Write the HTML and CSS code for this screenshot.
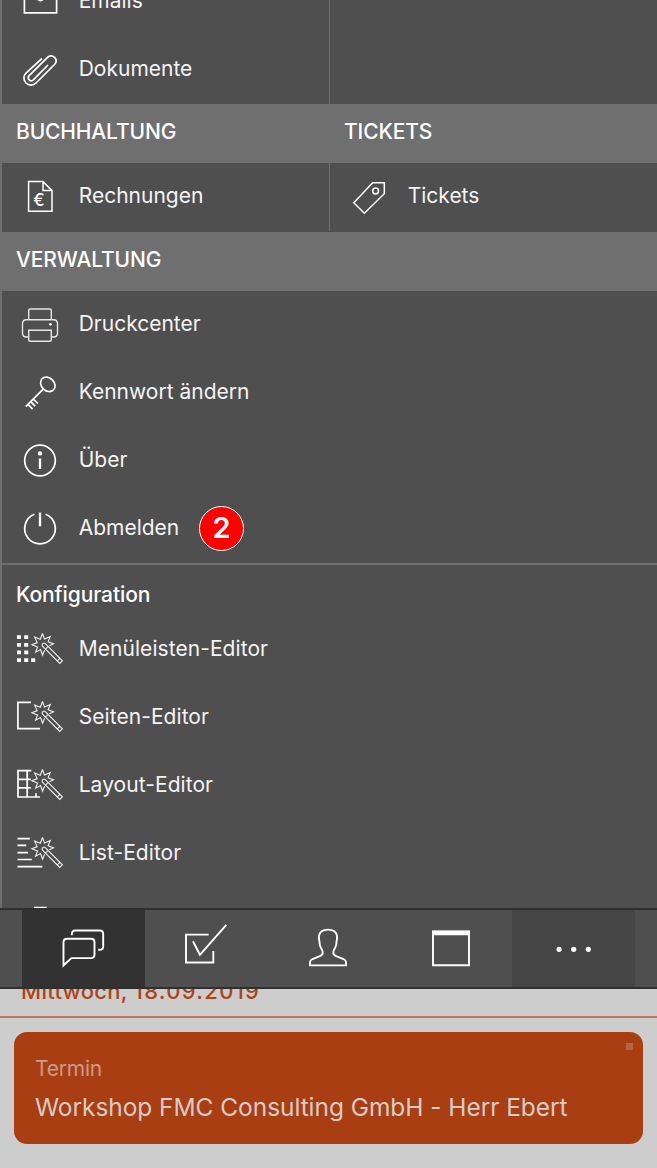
FILE: index.html
```html
<!DOCTYPE html>
<html lang="de">
<head>
<meta charset="utf-8">
<title>Menü</title>
<link rel="stylesheet" href="styles.css">
</head>
<body>
<svg class="defs" aria-hidden="true">
  <symbol id="wand" viewBox="0 0 48 48">
    <path d="M26.5 8.5l2 5.6 5.8-2.6-2.2 5.3 5.4 2.1-4.1 1.9M28.6 25.2l-2.1 5-1.9-5.6-5 2.6 1.9-5.2-5.6-2.2 5.3-2.2-2.6-5.6 5.7 2.3 2.2-5.8"/>
    <path d="M29.3 18.7L46.4 35.8l-2.6 2.6L26.7 21.3a1.8 1.8 0 0 1 2.6-2.6zM32.1 21.5l-2.6 2.6M43.8 33.4l-2.5 2.5"/>
  </symbol>
</svg>
<div class="screen">
  <nav class="menu">
    <div class="cols first">
      <div class="col">
        <a class="row"><svg class="icon" viewBox="0 0 48 48"><path d="M8.4 8H40.6V35.8H8.4zM8.4 10L21.5 22Q24.5 25.2 27.5 22L40.6 10"/></svg><span>Emails</span></a>
        <a class="row"><svg class="icon" viewBox="0 0 48 48"><path d="M26 13.5L10 28A7 7 0 0 0 20 38L39 19A5 5 0 0 0 32 12L12.9 30.9A3 3 0 0 0 17.1 35.1L32 20"/></svg><span>Dokumente</span></a>
      </div>
      <div class="col"></div>
    </div>
    <div class="heads"><h2>BUCHHALTUNG</h2><h2>TICKETS</h2></div>
    <div class="cols">
      <div class="col">
        <a class="row"><svg class="icon" viewBox="0 0 48 48"><path class="mid" d="M12.6 8.6H27L36 17.6V38.2H12.6zM27 8.6V17.6H36"/><text x="17.3" y="33.2" class="euro">€</text></svg><span>Rechnungen</span></a>
      </div>
      <div class="col">
        <a class="row"><svg class="icon" viewBox="0 0 48 48"><path class="mid" d="M27.7 9.7H39.3V20.7L19.3 40.2L8.8 29.7z"/><circle class="mid" cx="30.6" cy="18" r="2.9"/></svg><span>Tickets</span></a>
      </div>
    </div>
    <div class="heads admin"><h2>VERWALTUNG</h2></div>
    <div class="list">
      <a class="row"><svg class="icon" viewBox="0 0 48 48"><g class="fine"><path d="M12.7 18.7V9.5q0-1.5 1.5-1.5H33.8q1.5 0 1.5 1.5V18.7M12.7 36H10.5q-4 0-4-4V22.7q0-4 4-4H37.5q4 0 4 4V32q0 4-4 4H35.3"/><path d="M12.7 29.2H35.3V38.8q0 1.5-1.5 1.5H14.2q-1.5 0-1.5-1.5z"/></g><circle class="solid" cx="34.4" cy="23.3" r="1.4"/></svg><span>Druckcenter</span></a>
      <a class="row"><svg class="icon" viewBox="0 0 48 48"><ellipse cx="31.8" cy="15.3" rx="8" ry="6.4" transform="rotate(45 31.8 15.3)"/><path d="M27.2 20.2L9.7 37.7M12 35.4l4.6 4.8M14.7 32.7l4.4 4.4M17.3 30.1l4.6 4.4"/></svg><span>Kennwort ändern</span></a>
      <a class="row"><svg class="icon" viewBox="0 0 48 48"><circle cx="24" cy="23.5" r="15.3"/><circle class="solid" cx="24" cy="16.4" r="2.2"/><path class="stem" d="M24 21.5V32"/></svg><span>Über</span></a>
      <a class="row"><svg class="icon" viewBox="0 0 48 48"><path d="M18.4 9.3A15.3 15.3 0 1 0 29.6 9.3"/><path class="stem" d="M24 7.6V21.3"/></svg><span>Abmelden</span><b class="badge">2</b></a>
    </div>
    <div class="config">
      <h3>Konfiguration</h3>
      <a class="row"><svg class="icon" viewBox="0 0 48 48"><path class="solid" d="M1 10.3h4v3.8h-4zM8.2 10.3h4v3.8h-4zM1 17.9h4v3.8h-4zM8.2 17.9h4v3.8h-4zM1 25.5h4v3.8h-4zM8.2 25.5h4v3.8h-4zM1 33.3h4v3.8h-4zM8.2 33.3h4v3.8h-4zM15.2 33.3h4v3.8h-4z"/><use href="#wand" class="wand"/></svg><span>Menüleisten-Editor</span></a>
      <a class="row"><svg class="icon" viewBox="0 0 48 48"><path d="M15 9.3H1.9V35.7H24"/><use href="#wand" class="wand"/></svg><span>Seiten-Editor</span></a>
      <a class="row"><svg class="icon" viewBox="0 0 48 48"><path d="M15.3 9.6H2V36H24M11.2 9.6V36M2 18.3H14.8M2 26.8H14.8M20 32.3V36"/><use href="#wand" class="wand"/></svg><span>Layout-Editor</span></a>
      <a class="row"><svg class="icon" viewBox="0 0 48 48"><path d="M1.5 9.7h12.3M1.5 16.4h8.7M1.5 23.6h10.5M1.5 30.5h14.3M1.5 37.6h24.8"/><use href="#wand" class="wand"/></svg><span>List-Editor</span></a>
      <a class="row"><svg class="icon" viewBox="0 0 48 48"><path d="M18.8 10.6h11v8h-11z"/></svg></a>
    </div>
  </nav>
  <div class="tabs">
    <a class="tab active"><svg viewBox="0 0 56 56"><path d="M16.8 14.2V13q0-3.5 3.5-3.5H44.7q3.5 0 3.5 3.5V25.2q0 3.6-3.5 3.6H43.2"/><path d="M12 17.8H36q3.5 0 3.5 3.5V33.6q0 3.5-3.5 3.5H16.4L8.5 44.5V21.3q0-3.5 3.5-3.5z"/></svg></a>
    <a class="tab"><svg viewBox="0 0 56 56"><path d="M30.6 13.6H8V41.5H35.3V30M15 20.2L21.9 33.8L48.3 3.9"/></svg></a>
    <a class="tab"><svg viewBox="0 0 56 56"><path d="M10 44.4V41.2Q10 39.2 12.5 38L20.4 34.8Q23 33.6 22.7 31.2Q22.5 29.5 21 27Q19.3 24 19.5 20.8Q18.8 18 18.9 15.5Q19.5 8.6 28 8.6T37.1 15.5Q37.2 18 36.5 20.8Q36.7 24 35 27Q33.5 29.5 33.3 31.2Q33 33.6 35.6 34.8L43.5 38Q46 39.2 46 41.2V44.4z"/></svg></a>
    <a class="tab"><svg viewBox="0 0 56 56"><path d="M10 10.5H46V44.2H10z"/><path class="solid" d="M9.2 9.8H46.8V14.2H9.2z"/></svg></a>
    <a class="tab more"><svg viewBox="0 0 56 56"><g class="solid"><circle cx="13.1" cy="28.3" r="2.6"/><circle cx="27.7" cy="28.3" r="2.6"/><circle cx="42.3" cy="28.3" r="2.6"/></g></svg></a>
  </div>
  <main class="agenda">
    <div class="date"><div>Mittwoch, <span class="day">18.09.2019</span></div></div>
    <div class="card">
      <i class="mark"></i>
      <div class="kind">Termin</div>
      <div class="title">Workshop FMC Consulting GmbH - Herr Ebert</div>
    </div>
  </main>
</div>
</body>
</html>
```
FILE: styles.css
```css
* { box-sizing: border-box; }
body { margin: 0; background: #cdcdcd; font-family: Inter, "Liberation Sans", sans-serif; }
.defs { position: absolute; width: 0; height: 0; }
.screen { width: 657px; height: 1168px; overflow: hidden; display: flex; flex-direction: column; }

.menu { height: 908px; flex: none; overflow: hidden; background: #4f4f4f; color: #fff; border-left: 2px solid #6f6f6f; }
.cols { display: flex; height: 69px; }
.cols.first { height: 104px; align-items: flex-end; overflow: hidden; }
.cols.first .col { height: 137px; }
.col { width: 327px; height: 68px; }
.col + .col { width: 328px; border-left: 1px solid #6f6f6f; }
.row { display: flex; align-items: center; height: 68px; padding-left: 14px; gap: 14.7px; font-size: 21px; font-weight: 400; line-height: 26px; color: #f4f4f4; }
.row span { padding-bottom: 2px; }
.cols.first .row span, .config .row span { padding-bottom: 0; }
.config .row span { letter-spacing: 0.06px; }
.col + .col .row { padding-left: 15px; }
.heads { display: flex; height: 59px; margin-left: -2px; padding-left: 2px; background: #6f6f6f; }
.heads h2 { margin: 0; width: 329px; padding: 14px 0 0 14px; font-size: 21px; font-weight: 500; line-height: 27px; letter-spacing: -0.13px; }
.heads h2 + h2 { padding-left: 14.5px; }
.config { border-top: 2px solid #6f6f6f; }
.config h3 { margin: 0; height: 50px; padding: 16px 0 0 14px; font-size: 21px; font-weight: 500; line-height: 27px; letter-spacing: -0.1px; }

.icon { flex: none; width: 48px; height: 48px; }
.icon, .tab svg { fill: none; stroke: #fff; stroke-width: 1.7; overflow: visible; }
.icon .mid { stroke-width: 1.5; }
.icon .fine { stroke-width: 1.4; stroke: #e6e6e6; }
.icon .stem { stroke-width: 2.3; }
.icon .wand { stroke-width: 1.05; stroke: #f4f4f4; }
.icon .solid, .tab .solid { fill: #fff; stroke: none; }
.icon .euro { font-size: 17px; font-weight: 500; fill: #fff; stroke: none; }

.badge { display: flex; align-items: center; justify-content: center; width: 45px; height: 45px; margin: -2px 0 0 5px; border: 1.5px solid #fff; border-radius: 50%; background: #f00; color: #fff; font-size: 29px; font-weight: 600; }

.tabs { flex: none; display: flex; height: 81px; padding: 0 22px; background: #4f4f4f; border-top: 2px solid #2f2f2f; border-bottom: 2px solid #2f2f2f; }
.tab { flex: 1; display: flex; align-items: center; justify-content: center; }
.tab svg { width: 56px; height: 56px; stroke-width: 1.9; }
.tab.active { background: #323232; }
.tab.more { background: #454545; }

.agenda { flex: 1; background: #cdcdcd; }
.date { display: flex; align-items: flex-end; height: 29px; padding: 0 0 11px 21px; overflow: hidden; border-bottom: 2px solid #bd765a; color: #b04216; font-size: 22px; font-weight: 500; line-height: 28px; letter-spacing: 0.3px; }
.day { letter-spacing: 1.3px; }
.card { position: relative; height: 112px; margin: 14px; padding: 24px 21px; border-radius: 13px; background: #aa3e13; color: #d6cbc8; }
.mark { position: absolute; top: 11px; right: 10px; width: 7px; height: 7px; background: #b76442; }
.kind { font-size: 21px; font-weight: 400; line-height: 26px; letter-spacing: -0.2px; color: #cd9a86; }
.title { margin-top: 10px; font-size: 24.5px; font-weight: 400; line-height: 30px; letter-spacing: -0.06px; white-space: nowrap; }
```
